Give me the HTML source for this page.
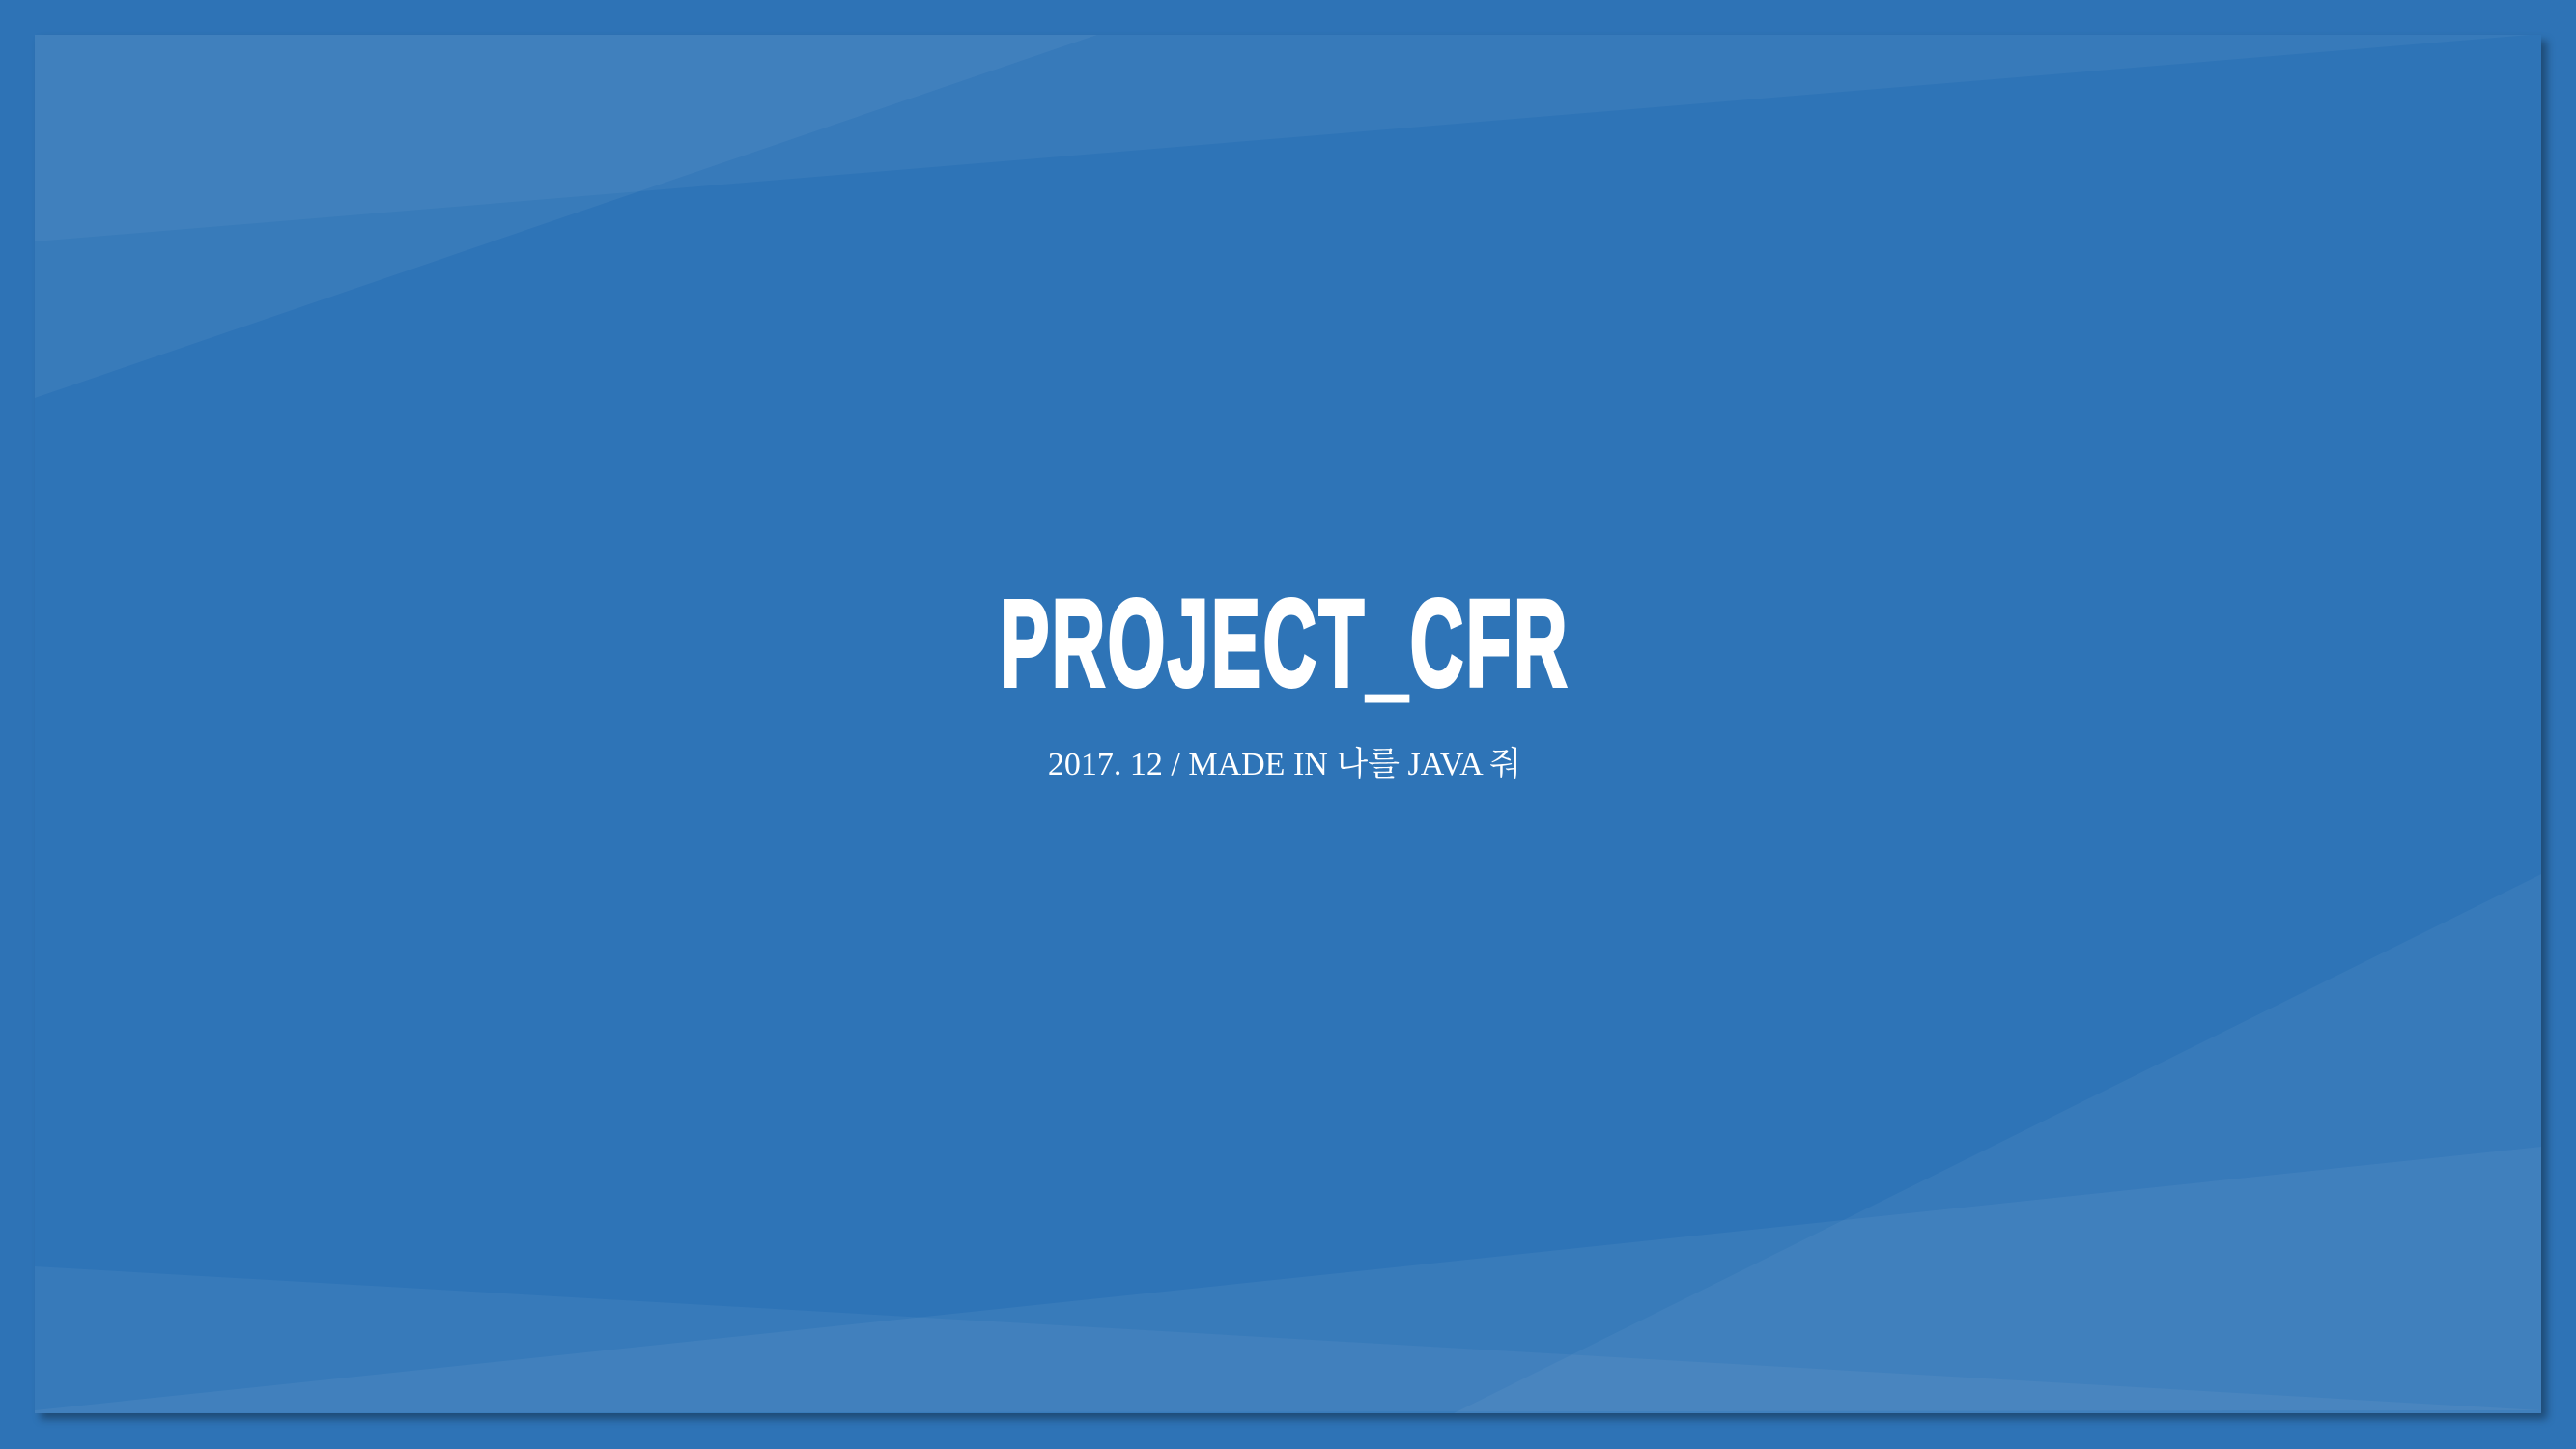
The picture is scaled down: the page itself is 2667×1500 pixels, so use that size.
<!DOCTYPE html>
<html><head><meta charset="utf-8"><style>
html,body{margin:0;padding:0;width:2667px;height:1500px;overflow:hidden;background:#2e73b6}
.slide{position:absolute;left:36px;top:36px;width:2595px;height:1427px;background:#2e74b7;box-shadow:6px 6px 8px rgba(0,0,0,0.35);overflow:hidden}
svg{position:absolute;left:0;top:0}
.t{position:absolute;left:0;top:597px;width:2660px;text-align:center;color:#fff;font-family:"Liberation Sans",sans-serif;font-weight:bold;font-size:128px;line-height:140px;transform:scaleX(0.6);transform-origin:1330px 0;letter-spacing:4px;-webkit-text-stroke:4px #fff}
.s{position:absolute;left:1030px;top:772px;width:600px;text-align:center;color:#fff;font-family:"Liberation Serif","Noto Serif CJK SC",serif;font-size:34px;line-height:40px;white-space:nowrap}
</style></head><body>
<div class="slide">
<svg width="2595" height="1427" viewBox="36 36 2595 1427">
<polygon points="36,36 1136,36 36,412" fill="#fff" fill-opacity="0.05"/>
<polygon points="36,36 2620,36 36,250" fill="#fff" fill-opacity="0.045"/>
<polygon points="36,1311 2631,1460 36,1463" fill="#fff" fill-opacity="0.045"/>
<polygon points="36,1460 2631,1187 2631,1463 36,1463" fill="#fff" fill-opacity="0.05"/>
<polygon points="1505,1463 2631,905 2631,1463" fill="#fff" fill-opacity="0.045"/>
</svg>
</div>
<div class="t">PROJECT_CFR</div>
<div class="s">2017. 12 / MADE IN 나를 JAVA 줘</div>
</body></html>
